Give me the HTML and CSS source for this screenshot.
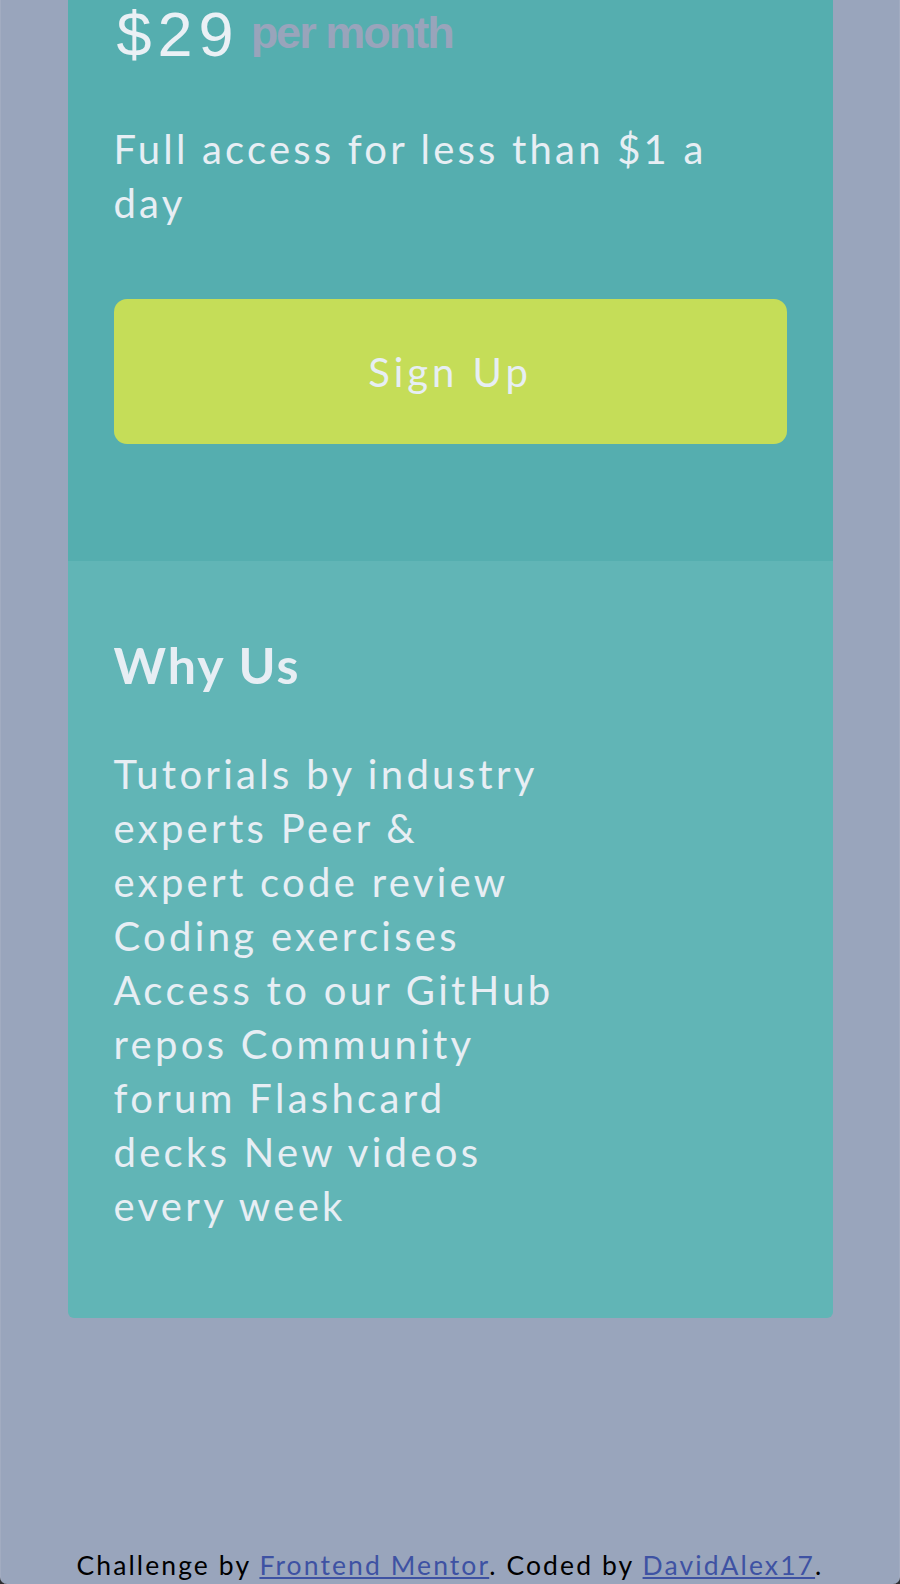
FILE: index.html
```html
<!DOCTYPE html>
<html lang="en">
<head>
<meta charset="utf-8">
<title>Single Price Grid</title>
<link rel="stylesheet" href="styles.css">
</head>
<body>
<div class="page">
  <main class="card">
    <section class="top">
      <p class="price"><span class="amount">$29</span><span class="per">per month</span></p>
      <p class="desc">Full access for less than $1 a<br>day</p>
      <a class="signup" href="#">Sign Up</a>
    </section>
    <section class="why">
      <h2 class="why-title">Why Us</h2>
      <p class="why-list">Tutorials by industry<br>experts Peer &amp;<br>expert code review<br>Coding exercises<br>Access to our GitHub<br>repos Community<br>forum Flashcard<br>decks New videos<br>every week</p>
    </section>
  </main>
  <footer class="attribution">Challenge by <a href="#">Frontend Mentor</a>. Coded by <a href="#">DavidAlex17</a>.</footer>
</div>
</body>
</html>
```

FILE: styles.css
```css
html {
  background: #2e2f33;
}
body {
  margin: 0;
  font-family: Lato, "Noto Sans", sans-serif;
}
.page {
  height: 1584px;
  overflow: hidden;
  background: #99a5bc;
  border-left: 1px solid #a2acc1;
  border-right: 1px solid #a2acc1;
  border-radius: 0 0 7px 7px;
  box-sizing: border-box;
  display: flex;
  flex-direction: column;
  align-items: center;
}
.card {
  width: 765px;
  display: flex;
  flex-direction: column;
  color: #e7eef4;
  border-radius: 0 0 6px 6px;
  overflow: hidden;
}
.top {
  background: #55aeaf;
  padding: 2px 46px 117px;
  display: flex;
  flex-direction: column;
}
.price {
  margin: 0;
  line-height: 64px;
  white-space: nowrap;
}
.amount {
  font-family: "Liberation Sans", Arial, sans-serif;
  font-size: 63px;
  letter-spacing: 6px;
  color: #eaf0f5;
  margin-left: 3px;
}
.per {
  font-family: "Liberation Sans", Arial, sans-serif;
  font-weight: bold;
  font-size: 45px;
  line-height: 1;
  letter-spacing: -2px;
  color: #99a4bb;
  margin-left: 11px;
  vertical-align: 8px;
}
.desc {
  margin: 40px 0 0;
  font-size: 40px;
  line-height: 54px;
  letter-spacing: 3.2px;
}
.signup {
  margin-top: 69px;
  height: 145px;
  border-radius: 13px;
  background: #c5dd58;
  color: #e7eef4;
  text-decoration: none;
  font-size: 40px;
  letter-spacing: 4px;
  display: flex;
  align-items: center;
  justify-content: center;
}
.why {
  background: #61b5b6;
  padding: 74px 46px 85px;
}
.why-title {
  margin: 0;
  font-size: 50px;
  line-height: 60px;
  font-weight: 700;
  letter-spacing: 2px;
}
.why-list {
  margin: 52px 0 0;
  font-size: 40px;
  line-height: 54px;
  letter-spacing: 3.3px;
}
.attribution {
  margin-top: auto;
  padding-bottom: 3px;
  font-size: 26.5px;
  line-height: 32px;
  letter-spacing: 2.1px;
  color: #000;
  text-align: center;
}
.attribution a {
  color: #3e52a3;
}
```
